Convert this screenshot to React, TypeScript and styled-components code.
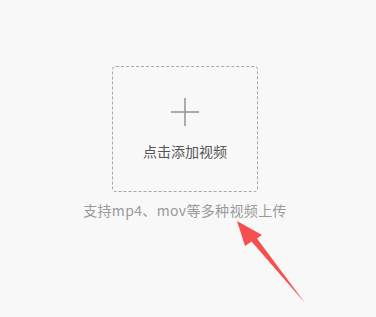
import React from "react";
import styled, { createGlobalStyle } from "styled-components";

const Global = createGlobalStyle`
  html, body { margin: 0; padding: 0; background: #f8f8f8; }
  body { font-family: "Noto Sans CJK SC", "Noto Sans", sans-serif; }
`;

const Page = styled.div`
  position: relative;
  width: 376px;
  height: 317px;
  box-sizing: border-box;
  padding: 66px 0 0 112px;
`;

const Uploader = styled.div`
  width: 146px;
  display: flex;
  flex-direction: column;
  align-items: center;
`;

const DropZone = styled.div`
  width: 146px;
  height: 126px;
  box-sizing: border-box;
  border: 1px dashed #a8a8a8;
  border-radius: 4px;
  display: flex;
  flex-direction: column;
  align-items: center;
  padding-top: 31px;
`;

const Label = styled.div`
  margin-top: 15px;
  font-size: 14px;
  line-height: 20px;
  color: #555;
`;

const Hint = styled.div`
  margin-top: 8px;
  font-size: 14px;
  line-height: 20px;
  color: #9a9a9a;
  white-space: nowrap;
  letter-spacing: 0.35px;
`;

const Arrow = styled.svg`
  position: absolute;
  left: 0;
  top: 0;
  pointer-events: none;
`;

export default function App() {
  return (
    <>
      <Global />
      <Page>
        <Uploader>
          <DropZone>
            <svg width="28" height="28" viewBox="0 0 28 28">
              <rect x="13.2" y="0" width="1.6" height="28" fill="#9a9a9a" />
              <rect x="0" y="13.2" width="28" height="1.6" fill="#9a9a9a" />
            </svg>
            <Label>点击添加视频</Label>
          </DropZone>
          <Hint>支持mp4、mov等多种视频上传</Hint>
        </Uploader>
        <Arrow width="376" height="317" viewBox="0 0 376 317">
          <polygon
            points="237,221 262,235 257,238.5 305,303 251.5,241.5 245,246"
            fill="#f5504f"
          />
        </Arrow>
      </Page>
    </>
  );
}
